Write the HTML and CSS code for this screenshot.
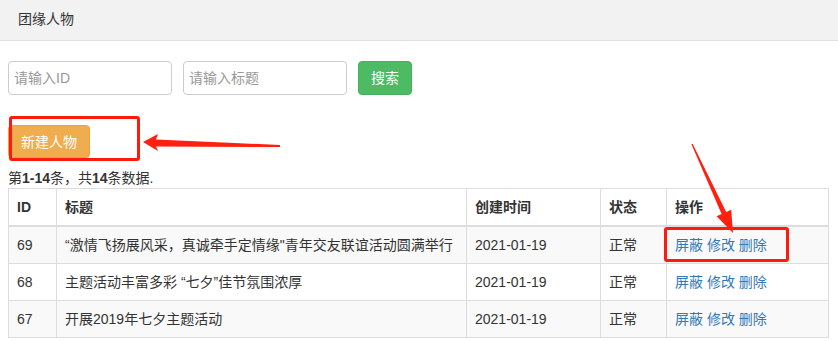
FILE: index.html
```html
<!DOCTYPE html>
<html lang="zh-CN">
<head>
    <meta charset="UTF-8">
    <meta name="viewport" content="width=device-width, initial-scale=1.0">
    <title>团缘人物</title>
    <link rel="stylesheet" href="styles.css">
</head>
<body>
    <div class="page-header">团缘人物</div>
    <div class="content">
        <form class="search-form">
            <input type="text" placeholder="请输入ID">
            <input type="text" placeholder="请输入标题">
            <button type="button" class="btn btn-success">搜索</button>
        </form>
        <div class="toolbar">
            <button type="button" class="btn btn-warning">新建人物</button>
        </div>
        <div class="summary">第<b>1-14</b>条，共<b>14</b>条数据.</div>
        <table class="grid">
            <thead>
                <tr>
                    <th class="col-id">ID</th>
                    <th class="col-title">标题</th>
                    <th class="col-date">创建时间</th>
                    <th class="col-status">状态</th>
                    <th>操作</th>
                </tr>
            </thead>
            <tbody>
                <tr>
                    <td>69</td>
                    <td>“激情飞扬展风采，真诚牵手定情缘"青年交友联谊活动圆满举行</td>
                    <td>2021-01-19</td>
                    <td>正常</td>
                    <td class="actions"><a href="#">屏蔽</a> <a href="#">修改</a> <a href="#">删除</a></td>
                </tr>
                <tr>
                    <td>68</td>
                    <td>主题活动丰富多彩 “七夕”佳节氛围浓厚</td>
                    <td>2021-01-19</td>
                    <td>正常</td>
                    <td class="actions"><a href="#">屏蔽</a> <a href="#">修改</a> <a href="#">删除</a></td>
                </tr>
                <tr>
                    <td>67</td>
                    <td>开展2019年七夕主题活动</td>
                    <td>2021-01-19</td>
                    <td>正常</td>
                    <td class="actions"><a href="#">屏蔽</a> <a href="#">修改</a> <a href="#">删除</a></td>
                </tr>
            </tbody>
        </table>
    </div>

    <!-- annotation marks -->
    <div class="mark mark-new"></div>
    <div class="mark mark-actions"></div>
    <svg class="arrows" width="838" height="341" viewBox="0 0 838 341">
        <polygon fill="#ff2010" points="143,142 158,134 156,139.5 280,145 280,147 156,146.5 158,151"/>
        <polygon fill="#ff2010" points="733,233 731.2,209.7 726.2,212 692.6,143.8 691.4,144.2 721.6,214 716.6,216.3"/>
    </svg>
</body>
</html>
```

FILE: styles.css
```css
body {
    margin: 0;
    font-family: "Liberation Sans", Arial, "Noto Sans CJK SC", sans-serif;
    font-size: 14px;
    line-height: 20px;
    color: #333;
    background: #fff;
    position: relative;
    overflow: hidden;
}
.page-header {
    height: 40px;
    line-height: 38px;
    padding-left: 18px;
    background: #f2f2f2;
    border-bottom: 1px solid #e0e0e0;
}
.content {
    padding: 20px 8px 0 8px;
}
.search-form {
    display: flex;
    gap: 11px;
    margin: 0;
}
.search-form input {
    width: 164px;
    height: 34px;
    box-sizing: border-box;
    padding: 6px 5px;
    border: 1px solid #ccc;
    border-radius: 4px;
    font-family: inherit;
    font-size: 14px;
    color: #555;
}
.search-form input::placeholder {
    color: #999;
}
.btn {
    height: 34px;
    box-sizing: border-box;
    padding: 6px 12px;
    border: 1px solid transparent;
    border-radius: 4px;
    font-family: inherit;
    font-size: 14px;
    line-height: 20px;
    color: #fff;
    cursor: pointer;
}
.btn-success {
    background: #4cbb64;
    border-color: #46b05d;
}
.btn-warning {
    height: 33px;
    background: #f0ad4e;
    border-color: #eea236;
}
.toolbar {
    margin-top: 30px;
}
.summary {
    margin-top: 10px;
}
.summary b {
    font-weight: bold;
}
.grid {
    width: 821px;
    border-collapse: collapse;
    border: 1px solid #ddd;
}
.grid th, .grid td {
    padding: 8px;
    border: 1px solid #ddd;
    text-align: left;
    line-height: 20px;
    white-space: nowrap;
}
.grid th {
    font-weight: bold;
    border-bottom: 2px solid #ddd;
}
.grid tbody tr:nth-child(odd) {
    background: #f9f9f9;
}
.col-id { width: 31px; }
.col-title { width: 393px; }
.col-date { width: 117px; }
.col-status { width: 49px; }
.actions a {
    color: #337ab7;
    text-decoration: none;
}
.mark {
    position: absolute;
    border: 3px solid #ff1a10;
    border-radius: 3px;
    box-sizing: border-box;
}
.mark-new {
    left: 9px;
    top: 116px;
    width: 131px;
    height: 45px;
}
.mark-actions {
    left: 664px;
    top: 227px;
    width: 125px;
    height: 35px;
}
.arrows {
    position: absolute;
    left: 0;
    top: 0;
    pointer-events: none;
}
```
